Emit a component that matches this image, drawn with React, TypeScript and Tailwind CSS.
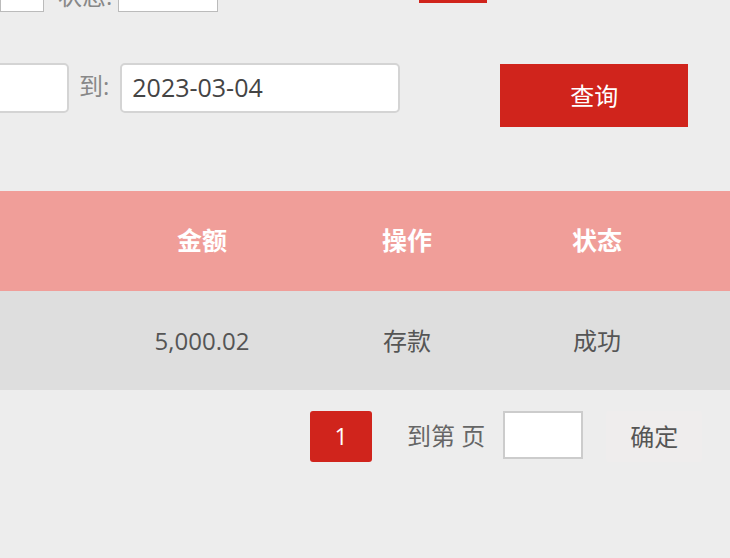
export default function App() {
  const font = { fontFamily: '"Open Sans", "Noto Sans CJK SC", sans-serif' };
  return (
    <div
      className="relative h-[558px] w-[730px] overflow-hidden bg-[#ededed] text-[#555]"
      style={font}
    >
      {/* top filter row, cut off above */}
      <div className="-mt-[38px] flex h-[50px] items-start">
        <div className="h-[50px] w-[44px] border border-[#bbb] bg-white" />
        <span className="ml-[14px] mt-[19px] text-[24px] leading-[30px] text-[#888]">状态:</span>
        <div className="ml-[6px] h-[50px] w-[100px] border border-[#bbb] bg-white" />
        <div className="ml-[201px] h-[41px] w-[68px] bg-[#d0241c]" />
      </div>

      {/* date row */}
      <div className="mt-[51px] flex items-start">
        <div className="-ml-[40px] h-[50px] w-[109px] rounded-[5px] border-2 border-[#d4d4d4] bg-white" />
        <span className="ml-[10px] mt-[8px] text-[24px] leading-[30px] text-[#888]">到:</span>
        <div className="ml-[11px] flex h-[50px] w-[280px] items-center rounded-[5px] border-2 border-[#d4d4d4] bg-white pl-[10px] text-[25px] text-[#444]">
          2023-03-04
        </div>
        <button className="ml-[100px] mt-px flex h-[63px] w-[188px] items-center justify-center bg-[#d0241c] text-[24px] text-white">
          查询
        </button>
      </div>

      {/* table */}
      <div className="mt-[64px]">
        <div className="grid h-[100px] grid-cols-[104px_196px_214px_166px_1fr] items-center bg-[#f09e99] text-[25px] font-bold text-white">
          <div />
          <div className="text-center">金额</div>
          <div className="text-center">操作</div>
          <div className="text-center">状态</div>
          <div />
        </div>
        <div className="grid h-[99px] grid-cols-[104px_196px_214px_166px_1fr] items-center bg-[#dedede] text-[24px] text-[#555]">
          <div />
          <div className="text-center">5,000.02</div>
          <div className="text-center">存款</div>
          <div className="text-center">成功</div>
          <div />
        </div>
      </div>

      {/* pagination */}
      <div className="mt-[21px] flex items-start">
        <div className="ml-[310px] flex h-[51px] w-[62px] items-center justify-center rounded-[3px] bg-[#d0241c] text-[23px] text-white">
          1
        </div>
        <span className="ml-[35px] mt-[10px] text-[24px] leading-[30px] text-[#666]">到第 页</span>
        <div className="ml-[18px] h-[48px] w-[80px] border-2 border-[#ccc] bg-white" />
        <button className="ml-[23px] flex h-[51px] w-[96px] items-center justify-center rounded-[3px] bg-[#efeded] text-[24px] text-[#555]">
          确定
        </button>
      </div>
    </div>
  );
}
